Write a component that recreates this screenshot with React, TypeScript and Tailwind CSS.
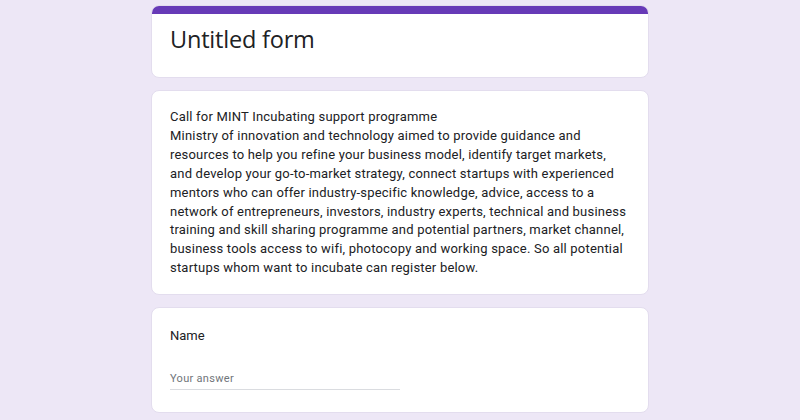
const lines = [
  "Call for MINT Incubating support programme",
  "Ministry of innovation and technology aimed to provide guidance and",
  "resources to help you refine your business model, identify target markets,",
  "and develop your go-to-market strategy, connect startups with experienced",
  "mentors who can offer industry-specific knowledge, advice, access to a",
  "network of entrepreneurs, investors, industry experts, technical and business",
  "training and skill sharing programme and potential partners, market channel,",
  "business tools access to wifi, photocopy and working space. So all potential",
  "startups whom want to incubate can register below.",
];

export default function App() {
  return (
    <div className="min-h-screen w-full bg-[#ede7f6] font-['Roboto',sans-serif] text-[#202124]">
      <div className="mx-auto flex w-[498px] flex-col gap-[12px] pt-[5px]">
        {/* title card */}
        <div className="overflow-hidden rounded-[8px] border border-[#e3ddee] bg-white">
          <div className="h-[8px] bg-[#673ab7]" />
          <div className="h-[63px] px-[18px] pt-[9px]">
            <h1 className="font-['Open_Sans',sans-serif] text-[23.5px] leading-[32px] tracking-[-0.2px] text-[#202124]">Untitled form</h1>
          </div>
        </div>

        {/* description */}
        <div className="rounded-[8px] border border-[#e3ddee] bg-white px-[18px] pb-[16px] pt-[17px]">
          <p className="whitespace-nowrap text-[13px] leading-[18.9px] tracking-[0.2px] text-[#202124]">
            {lines.map((l, i) => (
              <span key={i} className="block">
                {l}
              </span>
            ))}
          </p>
        </div>

        {/* question */}
        <div className="h-[106px] rounded-[8px] border border-[#e3ddee] bg-white px-[18px] pt-[19px]">
          <div className="text-[13px] leading-[18px] text-[#202124]">Name</div>
          <div className="mt-[27px] w-[230px] border-b border-[#dadce0] pb-[3px] text-[11px] leading-[14px] tracking-[0.3px] text-[#70757a]">
            Your answer
          </div>
        </div>
      </div>
    </div>
  );
}
